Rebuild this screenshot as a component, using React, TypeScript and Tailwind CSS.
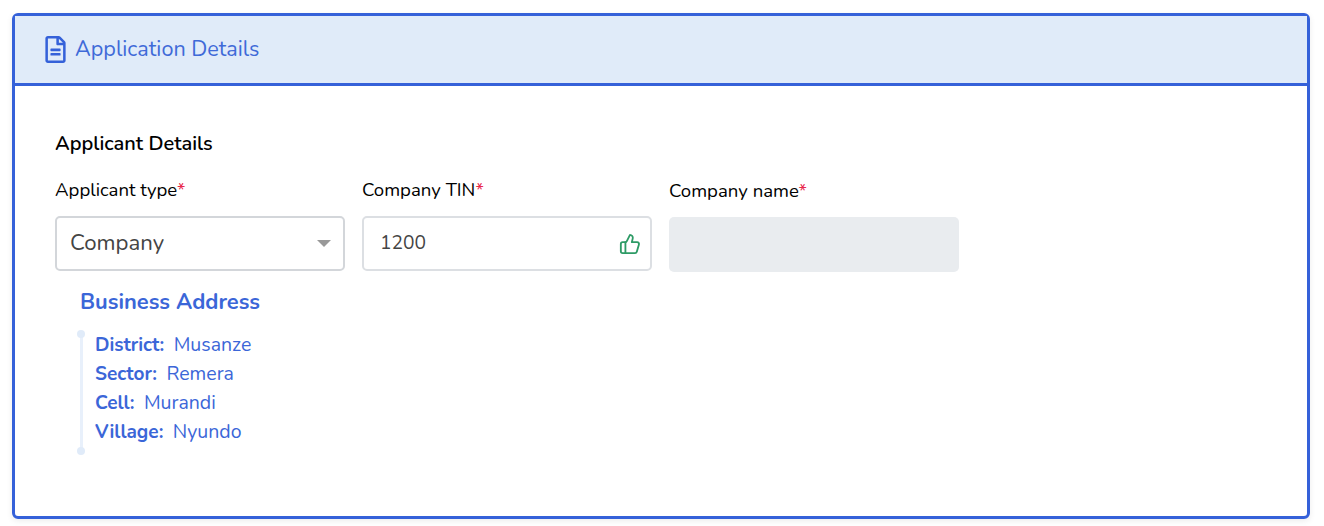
import { ThumbsUp } from 'lucide-react'
import { FaRegFileAlt } from 'react-icons/fa'

function Field({ label, children, className = '' }: { label: string; children: React.ReactNode; className?: string }) {
  return (
    <div className={`w-[290px] ${className}`}>
      <div className="text-[18.6px] leading-[24px] text-black">
        {label}
        <span className="text-[#e8274b]">*</span>
      </div>
      {children}
    </div>
  )
}

function Row({ name, value }: { name: string; value: string }) {
  return (
    <div className="h-[29px] text-[19.5px] leading-[29px] text-[#3b66d8]">
      <span className="font-bold text-[19px]">{name}:</span>
      <span className="ml-[9.5px]">{value}</span>
    </div>
  )
}

export default function App() {
  return (
    <div className="h-[526px] bg-white pt-[13px] pl-[12px] pr-[14px] font-['Nunito','Noto_Sans',sans-serif]">
      <div className="h-[506px] rounded-[6px] border-[3px] border-[#3561d9] shadow-[0_2px_6px_rgba(0,0,0,0.08)]">
        <div className="h-[70px] flex items-center gap-[6px] pl-[27px] bg-[#e0ebf9] border-b-[3px] border-[#3561d9]">
          <FaRegFileAlt size={27} className="text-[#3561d9]" />
          <span className="text-[21.6px] text-[#3f6ad8]">Application Details</span>
        </div>
        <div className="pt-[45px] pl-[40px]">
          <div className="text-[20px] leading-[26px] font-semibold text-black">Applicant Details</div>
          <div className="flex gap-[17px] mt-[21px]">
            <Field label="Applicant type">
              <div className="mt-[14px] h-[55px] flex items-center justify-between pl-[13px] pr-[12px] rounded-[5px] border-2 border-[#d3d6da] text-[22.2px] text-[#444]">
                <span className="pt-[1px]">Company</span>
                <span className="w-0 h-0 border-x-[7px] border-x-transparent border-t-[7px] border-t-[#999]" />
              </div>
            </Field>
            <Field label="Company TIN">
              <div className="mt-[14px] h-[55px] flex items-center justify-between pl-[16px] pr-[9px] rounded-[5px] border-2 border-[#dcdfe3] text-[19.2px] text-[#444]">
                1200
                <ThumbsUp size={22} className="text-[#2e9b66]" />
              </div>
            </Field>
            <Field label="Company name" className="pt-[1px]">
              <div className="mt-[14px] h-[55px] rounded-[5px] bg-[#e9ecef]" />
            </Field>
          </div>
          <div className="ml-[25px] mt-[15px] text-[21.9px] leading-[30px] font-bold text-[#3b66d8]">Business Address</div>
          <div className="relative ml-[22px] mt-[13px] w-fit pl-[18px] pb-[5px]">
            <span className="absolute left-[2.5px] top-[4px] bottom-0 w-[3px] bg-[#e8f0fb]" />
            <span className="absolute left-0 top-0 w-[8px] h-[8px] rounded-full bg-[#e0ebf9]" />
            <span className="absolute left-0 bottom-[-4px] w-[8px] h-[8px] rounded-full bg-[#e0ebf9]" />
            <Row name="District" value="Musanze" />
            <Row name="Sector" value="Remera" />
            <Row name="Cell" value="Murandi" />
            <Row name="Village" value="Nyundo" />
          </div>
        </div>
      </div>
    </div>
  )
}
